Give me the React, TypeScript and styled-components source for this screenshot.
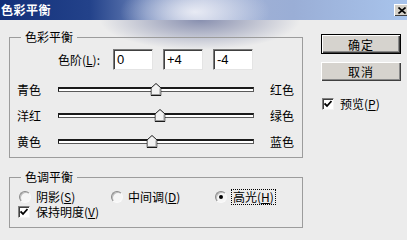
import React from 'react';
import styled, { createGlobalStyle } from 'styled-components';

const GlobalStyle = createGlobalStyle`
  html, body {
    margin: 0;
    padding: 0;
    background: #ececec;
  }
  body {
    font-family: "Noto Sans CJK SC", "Liberation Sans", sans-serif;
  }
`;

const Window = styled.div`
  width: 407px;
  height: 240px;
  overflow: hidden;
  display: flex;
  flex-direction: column;
  font-size: 12px;
  line-height: 15px;
  color: #000;
  background:
    radial-gradient(ellipse 100px 30px at 200px 20px, rgba(70, 82, 135, 0.6), rgba(70, 82, 135, 0) 100%),
    #ececec;
`;

const TitleBar = styled.div`
  height: 20px;
  flex: none;
  display: flex;
  align-items: center;
  justify-content: space-between;
  padding-left: 1px;
  background:
    radial-gradient(ellipse 75px 32px at 195px 12px, rgba(236, 238, 246, 0.95), rgba(236, 238, 246, 0) 100%),
    linear-gradient(90deg, #12307a 0%, #23428a 22%, #6a82b8 36%, #a4b2d4 50%, #9aaed6 72%, #a8c4ec 100%);
`;

const Title = styled.span`
  color: #fff;
  font-weight: bold;
  font-size: 12px;
  letter-spacing: 0.5px;
  line-height: 20px;
`;

const CloseButton = styled.div`
  width: 16px;
  height: 12px;
  margin-right: -3px;
  background: #d4d0c8;
  box-shadow: inset 1px 1px 0 #fff, inset -1px -1px 0 #404040;
  display: flex;
  align-items: center;
  justify-content: center;
`;

const Body = styled.div`
  display: flex;
  align-items: flex-start;
  padding-left: 9px;
`;

const LeftColumn = styled.div`
  width: 294px;
  display: flex;
  flex-direction: column;
`;

const Group = styled.fieldset<{ $top: number; $bottom: number }>`
  margin: ${(p) => p.$top}px 0 0;
  padding: 4px 7px ${(p) => p.$bottom}px 7px;
  border: 1px solid #9c9c9c;
  min-width: 0;
`;

const Legend = styled.legend`
  padding: 0 4px;
  margin-left: 4px;
  font-size: 12px;
  line-height: 16px;
`;

const LevelRow = styled.div`
  display: flex;
  align-items: center;
  height: 21px;
  margin-left: 41px;
  gap: 10px;
  margin-bottom: 6px;
`;

const LevelLabel = styled.span`
  width: 45px;
  flex: none;
  white-space: nowrap;
`;

const NumberBox = styled.div`
  width: 40px;
  height: 21px;
  box-sizing: border-box;
  background: #fff;
  border: 1px solid;
  border-color: #7a7a7a #e4e4e4 #e4e4e4 #7a7a7a;
  box-shadow: inset 1px 1px 0 #404040;
  padding: 2px 0 0 3px;
  font-family: "Liberation Sans", sans-serif;
  font-size: 13px;
  line-height: 16px;
`;

const SliderGrid = styled.div`
  display: grid;
  grid-template-columns: 25px 196px auto;
  grid-auto-rows: 26px;
  column-gap: 16px;
  align-items: center;
`;

const Track = styled.div`
  position: relative;
  height: 5px;
  box-sizing: border-box;
  background: #fff;
  border-top: 2px solid #1a1a1a;
  border-left: 1px solid #1a1a1a;
  border-bottom: 1px solid #5a5a5a;
  border-right: 1px solid #5a5a5a;
`;

const Thumb = styled.svg`
  position: absolute;
  top: -6px;
  transform: translateX(-50%);
`;

const Buttons = styled.div`
  margin-left: 18px;
  margin-top: 14px;
  display: flex;
  flex-direction: column;
`;

const PushButton = styled.div<{ $default?: boolean }>`
  width: 80px;
  height: ${(p) => (p.$default ? 20 : 19)}px;
  box-sizing: border-box;
  background: #d6d3ce;
  border: ${(p) => (p.$default ? '1px solid #000' : 'none')};
  box-shadow: inset 1px 1px 0 #fff, inset -1px -1px 0 #404040, inset -2px -2px 0 #8a8a8a;
  display: flex;
  align-items: center;
  justify-content: center;
  font-size: 12px;
  letter-spacing: 1px;
  & + & {
    margin-top: 8px;
  }
`;

const CheckRow = styled.div<{ $top?: number }>`
  display: flex;
  align-items: center;
  height: 15px;
  line-height: 15px;
  gap: 6px;
  margin-top: ${(p) => p.$top ?? 0}px;
  padding-left: 1px;
  white-space: nowrap;
`;

const Box = styled.span`
  width: 12px;
  height: 12px;
  box-sizing: border-box;
  flex: none;
  background: #fff;
  border: 1px solid;
  border-color: #808080 #f4f4f4 #f4f4f4 #808080;
  box-shadow: inset 1px 1px 0 #404040;
  display: flex;
  align-items: center;
  justify-content: center;
`;

const RadioRow = styled.div`
  display: grid;
  grid-template-columns: 92px 104px auto;
  height: 15px;
  line-height: 14px;
  align-items: center;
`;

const RadioOption = styled.div`
  display: flex;
  align-items: center;
  gap: 5px;
  padding-left: 2px;
  white-space: nowrap;
`;

const RadioDot = styled.span<{ $checked?: boolean }>`
  width: 12px;
  height: 12px;
  box-sizing: border-box;
  flex: none;
  border-radius: 50%;
  border: 1px solid;
  border-color: #8a8a8a #fafafa #fafafa #8a8a8a;
  background: #f6f6f6;
  box-shadow: inset 1px 1px 0 #bdbdbd;
  display: flex;
  align-items: center;
  justify-content: center;
  &::after {
    content: '';
    width: 4px;
    height: 4px;
    border-radius: 50%;
    background: ${(p) => (p.$checked ? '#000' : 'transparent')};
  }
`;

const Focused = styled.span`
  outline: 1px dotted #000;
  outline-offset: 0;
  padding: 0 1px;
`;

const Check = () => (
  <svg width="8" height="8" viewBox="0 0 8 8">
    <path d="M0.5 3.5 L3 6 L7.5 1" fill="none" stroke="#000" strokeWidth="1.8" />
  </svg>
);

const SliderThumb = ({ value }: { value: number }) => (
  <Thumb width="11" height="13" viewBox="0 0 11 13" style={{ left: `${(value + 100) / 2}%` }}>
    <polygon points="5.5,0.5 10.5,5 10.5,12.5 0.5,12.5 0.5,5" fill="#f2f2f2" stroke="#1a1a1a" />
    <polyline points="9.5,5.5 9.5,11.5 1.5,11.5" fill="none" stroke="#9a9a9a" />
  </Thumb>
);

const sliders = [
  { left: '青色', right: '红色', value: 0 },
  { left: '洋红', right: '绿色', value: 4 },
  { left: '黄色', right: '蓝色', value: -4 },
];

const App = () => (
  <Window>
    <GlobalStyle />
    <TitleBar>
      <Title>色彩平衡</Title>
      <CloseButton>
        <svg width="8" height="7" viewBox="0 0 8 7">
          <path d="M0.5 0.5 L7.5 6.5 M7.5 0.5 L0.5 6.5" stroke="#000" strokeWidth="1.6" />
        </svg>
      </CloseButton>
    </TitleBar>
    <Body>
      <LeftColumn>
        <Group $top={9} $bottom={3}>
          <Legend>色彩平衡</Legend>
          <LevelRow>
            <LevelLabel>
              色阶(<u>L</u>):
            </LevelLabel>
            <NumberBox>0</NumberBox>
            <NumberBox>+4</NumberBox>
            <NumberBox>-4</NumberBox>
          </LevelRow>
          <SliderGrid>
            {sliders.map((s) => (
              <React.Fragment key={s.left}>
                <span>{s.left}</span>
                <Track>
                  <SliderThumb value={s.value} />
                </Track>
                <span>{s.right}</span>
              </React.Fragment>
            ))}
          </SliderGrid>
        </Group>
        <Group $top={11} $bottom={8}>
          <Legend>色调平衡</Legend>
          <RadioRow>
            <RadioOption>
              <RadioDot />
              <span>
                阴影(<u>S</u>)
              </span>
            </RadioOption>
            <RadioOption>
              <RadioDot />
              <span>
                中间调(<u>D</u>)
              </span>
            </RadioOption>
            <RadioOption>
              <RadioDot $checked />
              <Focused>
                高光(<u>H</u>)
              </Focused>
            </RadioOption>
          </RadioRow>
          <CheckRow>
            <Box>
              <Check />
            </Box>
            <span>
              保持明度(<u>V</u>)
            </span>
          </CheckRow>
        </Group>
      </LeftColumn>
      <Buttons>
        <PushButton $default>确定</PushButton>
        <PushButton>取消</PushButton>
        <CheckRow $top={15}>
          <Box>
            <Check />
          </Box>
          <span>
            预览(<u>P</u>)
          </span>
        </CheckRow>
      </Buttons>
    </Body>
  </Window>
);

export default App;
